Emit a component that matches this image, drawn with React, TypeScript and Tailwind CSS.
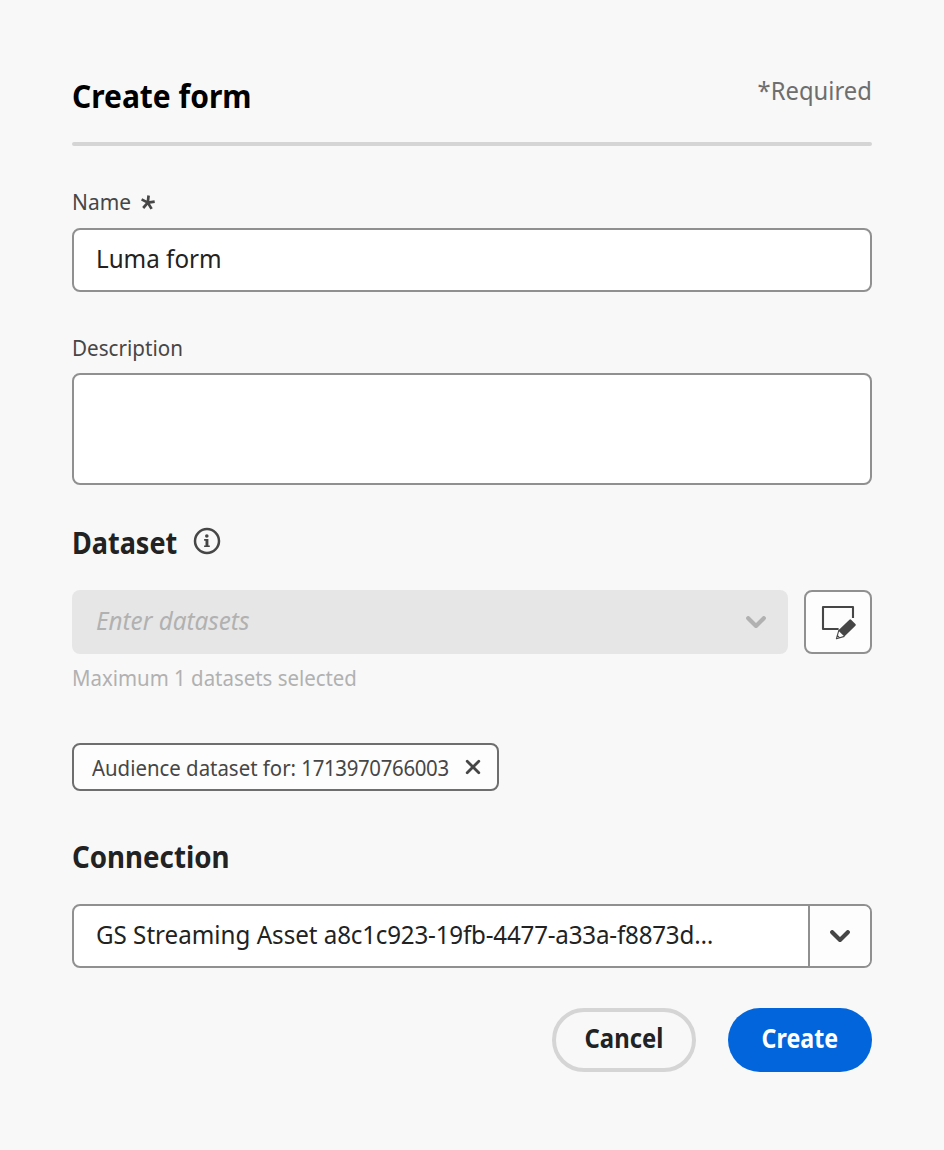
import type { ReactNode } from "react";

function Chevron({ className }: { className: string }) {
  return (
    <svg className={className} width="20" height="13" viewBox="0 0 20 13" fill="none">
      <path d="M2.2 2.2 10 9.9 17.8 2.2" stroke="currentColor" strokeWidth="4.2" strokeLinecap="round" strokeLinejoin="round" />
    </svg>
  );
}

function InfoIcon() {
  return (
    <svg width="28" height="28" viewBox="0 0 28 28" fill="none" className="text-[#464646]">
      <circle cx="14" cy="14" r="12" stroke="currentColor" strokeWidth="2.5" />
      <circle cx="13.8" cy="9" r="1.8" fill="currentColor" />
      <path d="M11.1 12h4.3v6.4h1.4v1.7h-5.7v-1.7h1.4v-4.7h-1.4z" fill="currentColor" />
    </svg>
  );
}

function EditIcon() {
  return (
    <svg width="36" height="36" viewBox="0 0 36 36" fill="none" className="text-[#464646]">
      <path d="M18.6 25H3V3h30v11" stroke="currentColor" strokeWidth="2.1" strokeLinejoin="round" />
      <path d="M29.4 15.7a1.2 1.2 0 0 1 1.7 0l4.3 4.3a1.2 1.2 0 0 1 0 1.7L24.4 32.4l-6.2-6z" fill="currentColor" />
      <path d="M18.8 26.4l-2.4 8.4 8-2.4M16.4 34.8l.9-3.4 2.3 2.4z" stroke="currentColor" strokeWidth="1.1" strokeLinejoin="round" />
    </svg>
  );
}

function Asterisk() {
  return (
    <svg width="14" height="15" viewBox="0 0 14 15" fill="none" className="mt-[3px] text-[#464646]">
      <path d="M6.8 7.6 7.6.5M6.8 7.6 13.7 6.6M6.8 7.6 10.6 13.9M6.8 7.6 2.2 13M6.8 7.6.6 4.4" stroke="currentColor" strokeWidth="2.7" />
    </svg>
  );
}

function Label({ className, children }: { className: string; children: ReactNode }) {
  return <label className={`block h-6 origin-left text-[22.5px] leading-[26px] text-[#464646] ${className}`}>{children}</label>;
}

export default function App() {
  return (
    <main className="flex h-[1150px] w-[944px] flex-col bg-[#f8f8f8] px-[72px] pt-[75px] font-['Noto_Sans',sans-serif] whitespace-nowrap text-[#222222]">
      <header className="flex h-[67px] shrink-0 items-start justify-between">
        <h1 className="origin-left scale-x-[.908] pt-px text-[33px] leading-10 font-bold text-black">Create form</h1>
        <span className="origin-right scale-x-[.915] text-[26px] leading-[30px] text-[#6e6e6e]">*Required</span>
      </header>
      <div className="h-1 shrink-0 rounded-full bg-[#d5d5d5]" />

      <div className="mt-[43px] flex h-6 shrink-0 items-center">
        <Label className="w-[69px] scale-x-[.93]">Name</Label>
        <Asterisk />
      </div>
      <div className="mt-[15px] flex h-16 shrink-0 items-center rounded-lg border-2 border-[#909090] bg-white px-[22px] pb-[3px] text-[26px]">
        <span className="origin-left scale-x-[.93]">Luma form</span>
      </div>

      <div className="mt-[43px] shrink-0">
        <Label className="scale-x-[.916]">Description</Label>
      </div>
      <div className="mt-[14px] h-28 shrink-0 rounded-lg border-2 border-[#909090] bg-white" />

      <div className="mt-9 flex h-10 shrink-0 items-center">
        <h2 className="w-[121px] origin-left scale-x-[.9] pt-[3px] text-[30px] leading-10 font-bold">Dataset</h2>
        <InfoIcon />
      </div>
      <div className="mt-[29px] flex h-16 shrink-0 gap-4">
        <div className="flex flex-1 items-center justify-between rounded-lg bg-[#e6e6e6] pr-[22px] pl-6 text-[26px] text-[#b1b1b1] italic">
          <span className="origin-left scale-x-[.933] pb-[3px]">Enter datasets</span>
          <Chevron className="text-[#b1b1b1]" />
        </div>
        <button className="flex w-[68px] items-center justify-center rounded-lg border-2 border-[#909090] bg-[#fdfdfd]">
          <EditIcon />
        </button>
      </div>
      <p className="mt-[11px] h-6 shrink-0 origin-left scale-x-[.907] text-[22.5px] leading-[26px] text-[#b1b1b1]">
        Maximum 1 datasets selected
      </p>

      <div className="mt-[54px] flex h-12 w-[427px] shrink-0 items-center rounded-lg border-2 border-[#6e6e6e] bg-[#fdfdfd] pl-[18px] text-[22.5px] text-[#464646]">
        <span className="w-[373px] origin-left scale-x-[.906] pt-[2px]">
          Audience dataset for: <span className="tracking-[-.35px]">1713970766003</span>
        </span>
        <svg width="16" height="16" viewBox="0 0 16 16" fill="none">
          <path d="M2.2 2.2 13.8 13.8M13.8 2.2 2.2 13.8" stroke="currentColor" strokeWidth="2.8" strokeLinecap="round" />
        </svg>
      </div>

      <h2 className="mt-[46px] h-10 shrink-0 origin-left scale-x-[.923] text-[30px] leading-10 font-bold">Connection</h2>
      <div className="mt-[27px] flex h-16 shrink-0 overflow-hidden rounded-lg border-2 border-[#909090] bg-white">
        <div className="flex min-w-0 flex-1 items-center pb-[3px] pl-[22px] text-[26px]">
          <span className="origin-left scale-x-[.929]">
            GS Streaming Asset <span className="tracking-[-.21px]">a8c1c923-19fb-4477-a33a-f8873d…</span>
          </span>
        </div>
        <div className="flex w-[62px] items-center justify-center border-l-2 border-[#909090] bg-[#fdfdfd]">
          <Chevron className="text-[#464646]" />
        </div>
      </div>

      <footer className="mt-10 flex h-16 shrink-0 justify-end gap-8">
        <button className="flex w-36 items-center justify-center rounded-full border-4 border-[#d5d5d5] pb-[3px] text-[26px] font-bold">
          <span className="scale-x-[.918]">Cancel</span>
        </button>
        <button className="flex w-36 items-center justify-center rounded-full bg-[#0265dc] pb-[3px] text-[26px] font-bold text-white">
          <span className="scale-x-[.893]">Create</span>
        </button>
      </footer>
    </main>
  );
}
